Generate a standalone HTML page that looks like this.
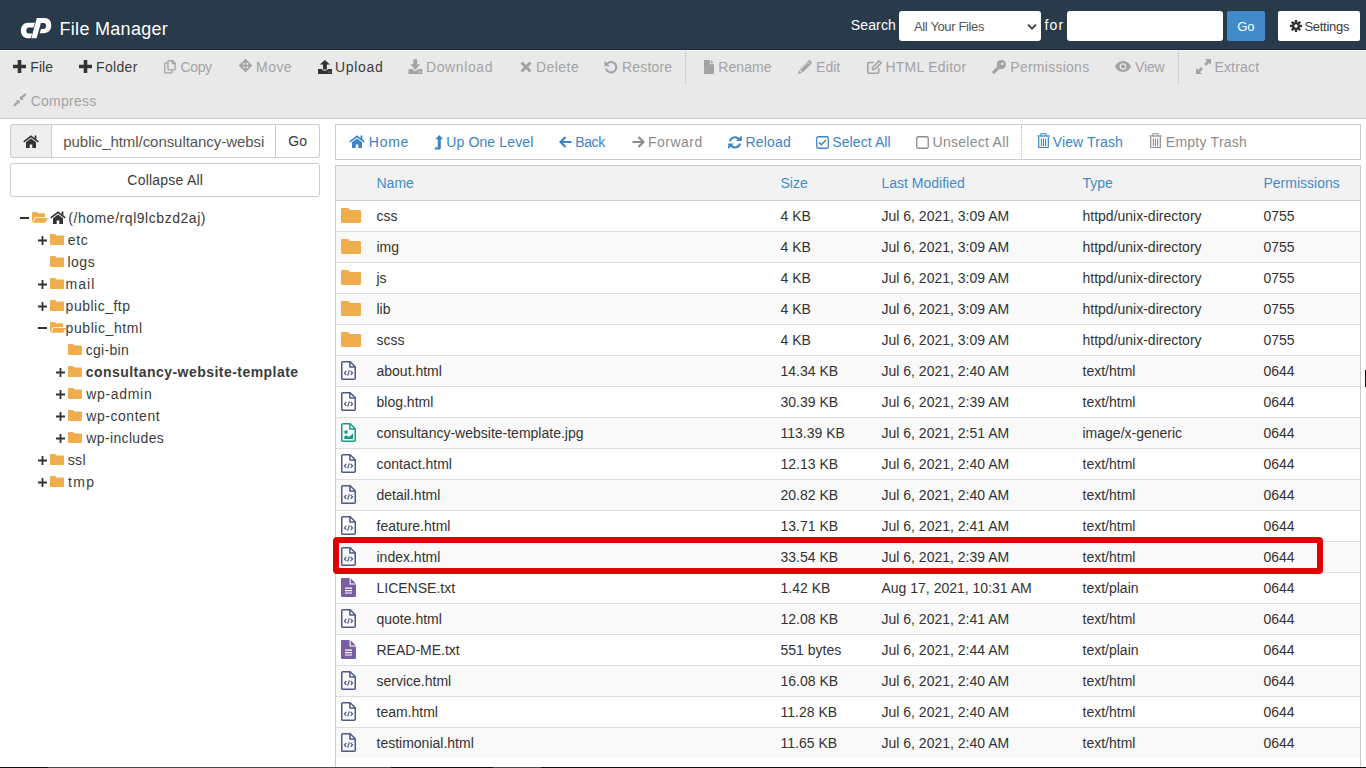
<!DOCTYPE html><html><head><meta charset="utf-8"><style>
*{margin:0;padding:0;box-sizing:border-box}
html,body{width:1366px;height:768px;overflow:hidden;background:#fff;font-family:"Liberation Sans",sans-serif;color:#333}
.ab{position:absolute;white-space:nowrap}
.t{position:absolute;white-space:nowrap;line-height:1}
svg{position:absolute;display:block}
#hdr{position:absolute;left:0;top:0;width:1366px;height:50px;background:#293a4a}
#tb{position:absolute;left:0;top:50px;width:1366px;height:69px;background:#e9e9e9;border-bottom:1px solid #c3c8cd}
.tbi{font-size:14px;color:#333}
.dis{color:#a3a3a3}
.sep{position:absolute;width:0;border-left:1px dotted #b8b8b8}
.lnk{color:#3c84c6}
.gry{color:#8c8c8c}
.tree{font-size:14px;color:#333}
.cell{font-size:14px;color:#333}
.th{font-size:14px;color:#428bca}
</style></head><body>
<div id="hdr"></div>
<svg style="left:0px;top:0px" width="60" height="45" viewBox="0 0 60 45"><path fill="#fff" d="M35 22.7 L28.2 22.7 C23.8 22.7 20.8 26.2 20.8 30.5 C20.8 34.8 23.8 38.3 28.2 38.3 L30.6 38.3 L32.2 33.6 L28.6 33.6 C27.1 33.6 26.3 32.2 26.3 30.5 C26.3 28.8 27.2 27.4 28.7 27.4 L33.5 27.4 Z"/><path fill="#fff" fill-rule="evenodd" d="M36.8 18 L44.6 18 C48.8 18 51.3 21 51.3 25.3 C51.3 29.8 48.4 33.2 44 33.2 L39.6 33.2 L41.1 28.9 L43.9 28.9 C45.4 28.9 46.1 27.4 46.1 25.8 C46.1 24.2 45.3 23 43.8 23 L40.9 23 L36.6 38.3 L31.3 38.3 Z"/></svg>
<div class="t" style="left:59.50px;top:20.00px;font-size:18px;letter-spacing:0.300px;color:#fff">File Manager</div>
<div class="t" style="left:850.70px;top:18.00px;font-size:14px;letter-spacing:0.160px;color:#fff">Search</div>
<div class="ab" style="left:899px;top:11px;width:142px;height:30px;background:#fff;border-radius:3px"></div>
<div class="t" style="left:914.00px;top:20.00px;font-size:13px;letter-spacing:-0.362px;color:#555">All Your Files</div>
<svg style="left:1026.5px;top:22.5px" width="10" height="8" viewBox="0 0 10 8"><path d="M1 1.6 L5 5.6 L9 1.6" stroke="#444" stroke-width="1.9" fill="none"/></svg>
<div class="t" style="left:1044.40px;top:18.00px;font-size:14px;letter-spacing:1.250px;color:#fff">for</div>
<div class="ab" style="left:1067px;top:11px;width:156px;height:30px;background:#fff;border-radius:3px"></div>
<div class="ab" style="left:1227px;top:11px;width:38px;height:30px;background:#428bca;border-radius:2px"></div>
<div class="t" style="left:1237.30px;top:20.00px;font-size:13px;letter-spacing:-0.100px;color:#fff">Go</div>
<div class="ab" style="left:1278px;top:11px;width:82px;height:30px;background:#fff;border-radius:2px"></div>
<svg style="left:1290px;top:20px" width="12" height="12" viewBox="0 0 14 14"><g fill="#333"><circle cx="7" cy="7" r="4.6"/><rect x="5.6" y="0" width="2.8" height="14" transform="rotate(0 7 7)"/><rect x="5.6" y="0" width="2.8" height="14" transform="rotate(45 7 7)"/><rect x="5.6" y="0" width="2.8" height="14" transform="rotate(90 7 7)"/><rect x="5.6" y="0" width="2.8" height="14" transform="rotate(135 7 7)"/></g><circle cx="7" cy="7" r="2" fill="#fff"/></svg>
<div class="t" style="left:1304.40px;top:20.00px;font-size:13px;letter-spacing:-0.271px;color:#3b3b3b">Settings</div>
<div id="tb"></div>
<div class="ab" style="left:0;top:49px;width:1366px;height:1px;background:#1d2a38"></div>
<div class="ab" style="left:0;top:50px;width:1366px;height:1px;background:#f4f4f4"></div>
<svg style="left:13px;top:60px" width="13" height="13" viewBox="0 0 13 13"><path fill="#333" d="M4.7 0h3.6v4.7H13v3.6H8.3V13H4.7V8.3H0V4.7h4.7z"/></svg>
<div class="t" style="left:30.30px;top:60.00px;font-size:14px;letter-spacing:0.033px;color:#3b3b3b">File</div>
<svg style="left:79px;top:60px" width="13" height="13" viewBox="0 0 13 13"><path fill="#333" d="M4.7 0h3.6v4.7H13v3.6H8.3V13H4.7V8.3H0V4.7h4.7z"/></svg>
<div class="t" style="left:96.10px;top:60.00px;font-size:14px;letter-spacing:0.320px;color:#3b3b3b">Folder</div>
<svg style="left:163px;top:59px" width="14" height="15" viewBox="0 0 14 15"><g fill="none" stroke="#a3a3a3" stroke-width="1.3"><path d="M5 3.85H2.6c-.5 0-.85.35-.85.85V13.1c0 .5.35.85.85.85H8.2c.5 0 .85-.35.85-.85V11"/><path d="M5.85 1.75H9.6l2.55 2.55V10.1c0 .5-.35.85-.85.85H5.85c-.5 0-.85-.35-.85-.85V2.6c0-.5.35-.85.85-.85z"/><path d="M9.4 1.9V4.5H12"/></g></svg>
<div class="t" style="left:180.50px;top:60.00px;font-size:14px;letter-spacing:-0.367px;color:#a3a3a3">Copy</div>
<svg style="left:238px;top:58px" width="15" height="15" viewBox="0 0 15 15"><path fill="#a3a3a3" fill-rule="evenodd" d="M7.5 0.8L14.3 7.6 7.5 14.6 0.7 7.6z M4.9 4.9h1.8v1.8H4.9z M8.4 4.9h1.8v1.8H8.4z M4.9 8.5h1.8v1.8H4.9z M8.4 8.5h1.8v1.8H8.4z"/></svg>
<div class="t" style="left:256.10px;top:60.00px;font-size:14px;letter-spacing:0.433px;color:#a3a3a3">Move</div>
<svg style="left:318px;top:59px" width="14" height="15" viewBox="0 0 14 15"><path fill="#333" d="M6.9 0.9L12 5.6H1.8z M5 5.5h3.9v5H5z M0 10.1H4c.3 1 1.5 1.7 2.9 1.7s2.6-.7 2.9-1.7H14V14.9H0z"/><rect x="10.2" y="12.6" width="2.4" height="0.8" fill="#8a8a8a"/></svg>
<div class="t" style="left:334.90px;top:60.00px;font-size:14px;letter-spacing:0.720px;color:#3b3b3b">Upload</div>
<svg style="left:408px;top:59px" width="15" height="15" viewBox="0 0 15 15"><path fill="#a3a3a3" d="M5.3 0.2h3.8v5.1h3.1L7.2 11 2.4 5.3h2.9z M0.5 10.1H4.6c.5 1.2 1.5 2 2.6 2s2.1-.8 2.6-2H14.3V14.9H0.5z"/><rect x="10.3" y="12.6" width="2.6" height="0.8" fill="#e9e9e9"/></svg>
<div class="t" style="left:426.00px;top:60.00px;font-size:14px;letter-spacing:0.600px;color:#a3a3a3">Download</div>
<svg style="left:519.5px;top:60.5px" width="12" height="12" viewBox="0 0 12 12"><path stroke="#a3a3a3" stroke-width="3" d="M1.5 1.5L10.5 10.5M10.5 1.5L1.5 10.5"/></svg>
<div class="t" style="left:536.10px;top:60.00px;font-size:14px;letter-spacing:0.420px;color:#a3a3a3">Delete</div>
<svg style="left:604px;top:59.7px" width="14" height="14" viewBox="0 0 14 14"><path fill="none" stroke="#a3a3a3" stroke-width="2" d="M3.2 3.8A5.2 5.2 0 1 1 2 8.5"/><path fill="#a3a3a3" d="M0.5 0.8v5.5H6z"/></svg>
<div class="t" style="left:622.00px;top:60.00px;font-size:14px;letter-spacing:0.167px;color:#a3a3a3">Restore</div>
<div class="sep" style="left:685px;top:51px;height:33px"></div>
<svg style="left:704px;top:60px" width="10" height="14" viewBox="0 0 10 14"><path fill="#a3a3a3" d="M0.6 0h5.6v4.2H10v9.2c0 .3-.3.6-.6.6H.6c-.3 0-.6-.3-.6-.6V.6C0 .3.3 0 .6 0z M7 0.2L9.8 3.3H7z"/></svg>
<div class="t" style="left:718.20px;top:60.00px;font-size:14px;letter-spacing:0.100px;color:#a3a3a3">Rename</div>
<svg style="left:798px;top:60px" width="14" height="14" viewBox="0 0 14 14"><path fill="#a3a3a3" d="M10.6 0.4c.4-.4 1-.4 1.4 0l1.6 1.6c.4.4.4 1 0 1.4L4.6 12.4 1.6 9.4z M1 10.2l2.8 2.8L0 14z"/><path fill="none" stroke="#e9e9e9" stroke-width="0.8" d="M2.6 9.6l7.6-7.6M9.6 1.4l3 3"/></svg>
<div class="t" style="left:816.10px;top:60.00px;font-size:14px;letter-spacing:-0.033px;color:#a3a3a3">Edit</div>
<svg style="left:866.5px;top:60px" width="15" height="14" viewBox="0 0 15 14"><path fill="none" stroke="#a3a3a3" stroke-width="1.6" d="M7 2.5H2.2c-.8 0-1.4.6-1.4 1.4v8.1c0 .8.6 1.4 1.4 1.4h8.1c.8 0 1.4-.6 1.4-1.4V8"/><path fill="none" stroke="#a3a3a3" stroke-width="1.6" d="M12 1l2 2-6.5 6.5H5.5V7.5z"/></svg>
<div class="t" style="left:885.40px;top:60.00px;font-size:14px;letter-spacing:0.260px;color:#a3a3a3">HTML Editor</div>
<svg style="left:992px;top:60px" width="14" height="14" viewBox="0 0 14 14"><circle cx="9.4" cy="4.6" r="4.6" fill="#a3a3a3"/><path stroke="#a3a3a3" stroke-width="3.2" stroke-linecap="round" d="M6.5 7.5L1.9 12.1"/><circle cx="10.3" cy="3.7" r="1.3" fill="#e9e9e9"/></svg>
<div class="t" style="left:1010.30px;top:60.00px;font-size:14px;letter-spacing:0.260px;color:#a3a3a3">Permissions</div>
<svg style="left:1115px;top:61.3px" width="16" height="11" viewBox="0 0 16 11"><path fill="#a3a3a3" d="M8 0C4 0 1 3 0 5.5 1 8 4 11 8 11s7-3 8-5.5C15 3 12 0 8 0z"/><circle cx="8" cy="5.5" r="3.3" fill="#e9e9e9"/><circle cx="8" cy="5.5" r="2" fill="#a3a3a3"/></svg>
<div class="t" style="left:1135.00px;top:60.00px;font-size:14px;letter-spacing:-0.133px;color:#a3a3a3">View</div>
<div class="sep" style="left:1178px;top:51px;height:33px"></div>
<svg style="left:1196px;top:59px" width="15" height="15" viewBox="0 0 15 15"><path fill="#a3a3a3" d="M9 0h6v6l-2-2-3 3-2-2 3-3z M0 9l2 2 3-3 2 2-3 3 2 2H0z"/></svg>
<div class="t" style="left:1214.40px;top:60.00px;font-size:14px;letter-spacing:0.183px;color:#a3a3a3">Extract</div>
<svg style="left:13px;top:93px" width="14" height="14" viewBox="0 0 14 14"><g fill="#a3a3a3" stroke="#a3a3a3"><path fill="none" stroke-width="2.2" stroke-linecap="round" d="M11.9 1.6L8.6 4.9 M1.6 12.2L4.9 8.9"/><path stroke="none" d="M7 2.8V6.7H10.9z M2.8 7.2H6.7V11z"/></g></svg>
<div class="t" style="left:30.70px;top:94.00px;font-size:14px;letter-spacing:0.257px;color:#a3a3a3">Compress</div>
<div class="ab" style="left:10px;top:124px;width:310px;height:34px;border:1px solid #ccc;border-radius:3px;background:#fff"></div>
<div class="ab" style="left:10px;top:124px;width:42px;height:34px;border:1px solid #ccc;border-radius:3px 0 0 3px;background:#eee"></div>
<div class="ab" style="left:275px;top:124px;width:45px;height:34px;border:1px solid #ccc;border-radius:0 3px 3px 0;background:#fff"></div>
<svg style="left:23px;top:134.5px" width="16" height="13" viewBox="0 0 16 13"><path fill="none" stroke="#333" stroke-width="1.7" d="M0.7 6.9L8 1.4l7.3 5.5"/><path fill="#333" d="M11.6 0.4h1.8v3.8h-1.8z M3 7.3L8 3.5l5 3.8V13H9.3V9.5H6.7V13H3z"/></svg>
<div class="t" style="left:63.30px;top:134.00px;font-size:15px;letter-spacing:-0.057px;color:#555">public_html/consultancy-websi</div>
<div class="t" style="left:288.20px;top:134.00px;font-size:14px;letter-spacing:0.200px;color:#3b3b3b">Go</div>
<div class="ab" style="left:10px;top:163px;width:310px;height:34px;border:1px solid #ccc;border-radius:3px;background:#fff"></div>
<div class="t" style="left:127.30px;top:173.00px;font-size:14px;letter-spacing:0.227px;color:#3b3b3b">Collapse All</div>
<div class="ab" style="left:20px;top:217px;width:9px;height:1.6px;background:#333"></div>
<svg style="left:32px;top:212px" width="16" height="11" viewBox="0 0 16 11"><path fill="#f0ad4e" d="M0 .8C0 .3.3 0 .8 0H5l1 1.2h6.2c.5 0 .8.3.8.8v3.2H3L0 10.5z M3.6 6H16l-2.8 4.7H.9z"/></svg>
<svg style="left:49.7px;top:211px" width="16" height="13" viewBox="0 0 16 13"><path fill="none" stroke="#333" stroke-width="1.7" d="M0.7 6.9L8 1.4l7.3 5.5"/><path fill="#333" d="M11.6 0.4h1.8v3.8h-1.8z M3 7.3L8 3.5l5 3.8V13H9.3V9.5H6.7V13H3z"/></svg>
<div class="t" style="left:68.30px;top:211.00px;font-size:14px;letter-spacing:0.547px;color:#3b3b3b">(/home/rql9lcbzd2aj)</div>
<svg style="left:37.9px;top:235.8px" width="9" height="9" viewBox="0 0 9 9"><path fill="#333" d="M3.6 0h1.8v3.6H9v1.8H5.4V9H3.6V5.4H0V3.6h3.6z"/></svg>
<svg style="left:50px;top:234px" width="14" height="11" viewBox="0 0 14 11"><path fill="#f0ad4e" d="M0.8 0h4.4l1.2 1.5h6.8c.4 0 .8.4.8.8v7.9c0 .4-.4.8-.8.8H.8C.4 11 0 10.6 0 10.2V.8C0 .4.4 0 .8 0z"/></svg>
<div class="t" style="left:67.70px;top:233.00px;font-size:14px;letter-spacing:0.700px;color:#3b3b3b">etc</div>
<svg style="left:50px;top:256px" width="14" height="11" viewBox="0 0 14 11"><path fill="#f0ad4e" d="M0.8 0h4.4l1.2 1.5h6.8c.4 0 .8.4.8.8v7.9c0 .4-.4.8-.8.8H.8C.4 11 0 10.6 0 10.2V.8C0 .4.4 0 .8 0z"/></svg>
<div class="t" style="left:67.40px;top:255.00px;font-size:14px;letter-spacing:0.533px;color:#3b3b3b">logs</div>
<svg style="left:37.9px;top:279.8px" width="9" height="9" viewBox="0 0 9 9"><path fill="#333" d="M3.6 0h1.8v3.6H9v1.8H5.4V9H3.6V5.4H0V3.6h3.6z"/></svg>
<svg style="left:50px;top:278px" width="14" height="11" viewBox="0 0 14 11"><path fill="#f0ad4e" d="M0.8 0h4.4l1.2 1.5h6.8c.4 0 .8.4.8.8v7.9c0 .4-.4.8-.8.8H.8C.4 11 0 10.6 0 10.2V.8C0 .4.4 0 .8 0z"/></svg>
<div class="t" style="left:65.60px;top:277.00px;font-size:14px;letter-spacing:1.000px;color:#3b3b3b">mail</div>
<svg style="left:37.9px;top:301.8px" width="9" height="9" viewBox="0 0 9 9"><path fill="#333" d="M3.6 0h1.8v3.6H9v1.8H5.4V9H3.6V5.4H0V3.6h3.6z"/></svg>
<svg style="left:50px;top:300px" width="14" height="11" viewBox="0 0 14 11"><path fill="#f0ad4e" d="M0.8 0h4.4l1.2 1.5h6.8c.4 0 .8.4.8.8v7.9c0 .4-.4.8-.8.8H.8C.4 11 0 10.6 0 10.2V.8C0 .4.4 0 .8 0z"/></svg>
<div class="t" style="left:65.60px;top:299.00px;font-size:14px;letter-spacing:0.500px;color:#3b3b3b">public_ftp</div>
<div class="ab" style="left:38px;top:327px;width:9px;height:1.6px;background:#333"></div>
<svg style="left:50px;top:322px" width="16" height="11" viewBox="0 0 16 11"><path fill="#f0ad4e" d="M0 .8C0 .3.3 0 .8 0H5l1 1.2h6.2c.5 0 .8.3.8.8v3.2H3L0 10.5z M3.6 6H16l-2.8 4.7H.9z"/></svg>
<div class="t" style="left:65.60px;top:321.00px;font-size:14px;letter-spacing:0.570px;color:#3b3b3b">public_html</div>
<svg style="left:68px;top:344px" width="14" height="11" viewBox="0 0 14 11"><path fill="#f0ad4e" d="M0.8 0h4.4l1.2 1.5h6.8c.4 0 .8.4.8.8v7.9c0 .4-.4.8-.8.8H.8C.4 11 0 10.6 0 10.2V.8C0 .4.4 0 .8 0z"/></svg>
<div class="t" style="left:85.65px;top:343.00px;font-size:14px;letter-spacing:0.325px;color:#3b3b3b">cgi-bin</div>
<svg style="left:55.9px;top:367.8px" width="9" height="9" viewBox="0 0 9 9"><path fill="#333" d="M3.6 0h1.8v3.6H9v1.8H5.4V9H3.6V5.4H0V3.6h3.6z"/></svg>
<svg style="left:68px;top:366px" width="14" height="11" viewBox="0 0 14 11"><path fill="#f0ad4e" d="M0.8 0h4.4l1.2 1.5h6.8c.4 0 .8.4.8.8v7.9c0 .4-.4.8-.8.8H.8C.4 11 0 10.6 0 10.2V.8C0 .4.4 0 .8 0z"/></svg>
<div class="t" style="left:85.65px;top:365.00px;font-size:14px;letter-spacing:0.465px;font-weight:bold;color:#3b3b3b">consultancy-website-template</div>
<svg style="left:55.9px;top:389.8px" width="9" height="9" viewBox="0 0 9 9"><path fill="#333" d="M3.6 0h1.8v3.6H9v1.8H5.4V9H3.6V5.4H0V3.6h3.6z"/></svg>
<svg style="left:68px;top:388px" width="14" height="11" viewBox="0 0 14 11"><path fill="#f0ad4e" d="M0.8 0h4.4l1.2 1.5h6.8c.4 0 .8.4.8.8v7.9c0 .4-.4.8-.8.8H.8C.4 11 0 10.6 0 10.2V.8C0 .4.4 0 .8 0z"/></svg>
<div class="t" style="left:86.25px;top:387.00px;font-size:14px;letter-spacing:0.679px;color:#3b3b3b">wp-admin</div>
<svg style="left:55.9px;top:411.8px" width="9" height="9" viewBox="0 0 9 9"><path fill="#333" d="M3.6 0h1.8v3.6H9v1.8H5.4V9H3.6V5.4H0V3.6h3.6z"/></svg>
<svg style="left:68px;top:410px" width="14" height="11" viewBox="0 0 14 11"><path fill="#f0ad4e" d="M0.8 0h4.4l1.2 1.5h6.8c.4 0 .8.4.8.8v7.9c0 .4-.4.8-.8.8H.8C.4 11 0 10.6 0 10.2V.8C0 .4.4 0 .8 0z"/></svg>
<div class="t" style="left:86.25px;top:409.00px;font-size:14px;letter-spacing:0.550px;color:#3b3b3b">wp-content</div>
<svg style="left:55.9px;top:433.8px" width="9" height="9" viewBox="0 0 9 9"><path fill="#333" d="M3.6 0h1.8v3.6H9v1.8H5.4V9H3.6V5.4H0V3.6h3.6z"/></svg>
<svg style="left:68px;top:432px" width="14" height="11" viewBox="0 0 14 11"><path fill="#f0ad4e" d="M0.8 0h4.4l1.2 1.5h6.8c.4 0 .8.4.8.8v7.9c0 .4-.4.8-.8.8H.8C.4 11 0 10.6 0 10.2V.8C0 .4.4 0 .8 0z"/></svg>
<div class="t" style="left:86.25px;top:431.00px;font-size:14px;letter-spacing:0.365px;color:#3b3b3b">wp-includes</div>
<svg style="left:37.9px;top:455.8px" width="9" height="9" viewBox="0 0 9 9"><path fill="#333" d="M3.6 0h1.8v3.6H9v1.8H5.4V9H3.6V5.4H0V3.6h3.6z"/></svg>
<svg style="left:50px;top:454px" width="14" height="11" viewBox="0 0 14 11"><path fill="#f0ad4e" d="M0.8 0h4.4l1.2 1.5h6.8c.4 0 .8.4.8.8v7.9c0 .4-.4.8-.8.8H.8C.4 11 0 10.6 0 10.2V.8C0 .4.4 0 .8 0z"/></svg>
<div class="t" style="left:67.70px;top:453.00px;font-size:14px;letter-spacing:0.350px;color:#3b3b3b">ssl</div>
<svg style="left:37.9px;top:477.8px" width="9" height="9" viewBox="0 0 9 9"><path fill="#333" d="M3.6 0h1.8v3.6H9v1.8H5.4V9H3.6V5.4H0V3.6h3.6z"/></svg>
<svg style="left:50px;top:476px" width="14" height="11" viewBox="0 0 14 11"><path fill="#f0ad4e" d="M0.8 0h4.4l1.2 1.5h6.8c.4 0 .8.4.8.8v7.9c0 .4-.4.8-.8.8H.8C.4 11 0 10.6 0 10.2V.8C0 .4.4 0 .8 0z"/></svg>
<div class="t" style="left:67.90px;top:475.00px;font-size:14px;letter-spacing:1.450px;color:#3b3b3b">tmp</div>
<div class="ab" style="left:335px;top:124px;width:1026px;height:36px;border:1px solid #ccc;background:#fff"></div>
<svg style="left:349px;top:135px" width="16" height="13" viewBox="0 0 16 13"><path fill="none" stroke="#3c84c6" stroke-width="1.7" d="M0.7 6.9L8 1.4l7.3 5.5"/><path fill="#3c84c6" d="M11.6 0.4h1.8v3.8h-1.8z M3 7.3L8 3.5l5 3.8V13H9.3V9.5H6.7V13H3z"/></svg>
<div class="t" style="left:368.80px;top:135.00px;font-size:14px;letter-spacing:0.733px;color:#3c84c6">Home</div>
<svg style="left:434px;top:134.5px" width="10" height="15" viewBox="0 0 10 15"><path fill="#3c84c6" d="M5.3 0L9.1 4.2H6.8V13.3c0 .7-.5 1.2-1.2 1.2H0.2L1.6 12.2H3.8V4.2H1.5z"/></svg>
<div class="t" style="left:446.20px;top:135.00px;font-size:14px;letter-spacing:0.145px;color:#3c84c6">Up One Level</div>
<svg style="left:559px;top:135.5px" width="13" height="12" viewBox="0 0 13 12"><path fill="none" stroke="#3c84c6" stroke-width="2.2" d="M12.5 6H2M6.5 1L1.5 6l5 5"/></svg>
<div class="t" style="left:575.20px;top:135.00px;font-size:14px;letter-spacing:-0.367px;color:#3c84c6">Back</div>
<svg style="left:632px;top:135.5px" width="13" height="12" viewBox="0 0 13 12"><path fill="none" stroke="#8c8c8c" stroke-width="2.2" d="M0.5 6H11M6.5 1l5 5-5 5"/></svg>
<div class="t" style="left:648.10px;top:135.00px;font-size:14px;letter-spacing:0.467px;color:#8c8c8c">Forward</div>
<svg style="left:728px;top:134.5px" width="14" height="15" viewBox="0 0 14 15"><path fill="none" stroke="#3c84c6" stroke-width="2" d="M1.9 6.4A5.2 5.2 0 0 1 11 4.1M12.1 8.4A5.2 5.2 0 0 1 3 10.5"/><path fill="#3c84c6" d="M8 6.1H13.8V0.5z M0.2 8.4H5.7L0.2 14.3z"/></svg>
<div class="t" style="left:745.50px;top:135.00px;font-size:14px;letter-spacing:0.160px;color:#3c84c6">Reload</div>
<svg style="left:816px;top:135.5px" width="13" height="13" viewBox="0 0 13 13"><rect x="0.75" y="0.75" width="11.5" height="11.5" rx="1.5" fill="none" stroke="#3c84c6" stroke-width="1.3"/><path d="M3 6.3l2.4 2.4L10 4" fill="none" stroke="#3c84c6" stroke-width="1.6"/></svg>
<div class="t" style="left:832.30px;top:135.00px;font-size:14px;letter-spacing:0.089px;color:#3c84c6">Select All</div>
<svg style="left:916px;top:135.5px" width="13" height="13" viewBox="0 0 13 13"><rect x="0.75" y="0.75" width="11.5" height="11.5" rx="1.5" fill="none" stroke="#8c8c8c" stroke-width="1.3"/></svg>
<div class="t" style="left:932.50px;top:135.00px;font-size:14px;letter-spacing:0.282px;color:#8c8c8c">Unselect All</div>
<div class="sep" style="left:1021px;top:126px;height:32px"></div>
<svg style="left:1036.5px;top:133.2px" width="13" height="15" viewBox="0 0 13 15"><g fill="none" stroke="#3c84c6"><path stroke-width="1.1" d="M3.9 2.4V0.7h5.2v1.7"/><path stroke-width="1.3" d="M0.3 3h12.4"/><path stroke-width="1.2" d="M1.7 4v10.1c0 .4.3.6.6.6h8.4c.3 0 .6-.2.6-.6V4"/><path stroke-width="1.1" d="M4.4 5.4v7.8M6.5 5.4v7.8M8.6 5.4v7.8"/></g></svg>
<div class="t" style="left:1052.80px;top:135.00px;font-size:14px;letter-spacing:0.111px;color:#3c84c6">View Trash</div>
<svg style="left:1149px;top:133.2px" width="13" height="15" viewBox="0 0 13 15"><g fill="none" stroke="#8c8c8c"><path stroke-width="1.1" d="M3.9 2.4V0.7h5.2v1.7"/><path stroke-width="1.3" d="M0.3 3h12.4"/><path stroke-width="1.2" d="M1.7 4v10.1c0 .4.3.6.6.6h8.4c.3 0 .6-.2.6-.6V4"/><path stroke-width="1.1" d="M4.4 5.4v7.8M6.5 5.4v7.8M8.6 5.4v7.8"/></g></svg>
<div class="t" style="left:1165.80px;top:135.00px;font-size:14px;letter-spacing:0.250px;color:#8c8c8c">Empty Trash</div>
<div class="ab" style="left:335px;top:165px;width:1026px;height:620px;border:1px solid #ccc;background:#fff"></div>
<div class="ab" style="left:336px;top:166px;width:1024px;height:34px;background:#f2f2f2"></div>
<div class="ab" style="left:336px;top:200px;width:1024px;height:1px;background:#cfcfcf"></div>
<div class="t th" style="left:376.5px;top:176px">Name</div>
<div class="t th" style="left:780.5px;top:176px">Size</div>
<div class="t th" style="left:881.5px;top:176px">Last Modified</div>
<div class="t th" style="left:1082.5px;top:176px">Type</div>
<div class="t th" style="left:1263.5px;top:176px">Permissions</div>
<svg style="left:341px;top:208px" width="20" height="15" viewBox="0 0 20 15"><path fill="#f0ad4e" d="M1.2 0h6l1.8 2H18.8c.7 0 1.2.5 1.2 1.2v10.6c0 .7-.5 1.2-1.2 1.2H1.2C.5 15 0 14.5 0 13.8V1.2C0 .5.5 0 1.2 0z"/></svg>
<div class="t cell" style="left:376.5px;top:209px">css</div>
<div class="t cell" style="left:780.5px;top:209px">4 KB</div>
<div class="t cell" style="left:881.5px;top:209px">Jul 6, 2021, 3:09 AM</div>
<div class="t cell" style="left:1082.5px;top:209px">httpd/unix-directory</div>
<div class="t cell" style="left:1263.5px;top:209px">0755</div>
<div class="ab" style="left:336px;top:231px;width:1024px;height:1px;background:#ddd"></div>
<div class="ab" style="left:336px;top:232px;width:1024px;height:30px;background:#f9f9f9"></div>
<svg style="left:341px;top:239px" width="20" height="15" viewBox="0 0 20 15"><path fill="#f0ad4e" d="M1.2 0h6l1.8 2H18.8c.7 0 1.2.5 1.2 1.2v10.6c0 .7-.5 1.2-1.2 1.2H1.2C.5 15 0 14.5 0 13.8V1.2C0 .5.5 0 1.2 0z"/></svg>
<div class="t cell" style="left:376.5px;top:240px">img</div>
<div class="t cell" style="left:780.5px;top:240px">4 KB</div>
<div class="t cell" style="left:881.5px;top:240px">Jul 6, 2021, 3:09 AM</div>
<div class="t cell" style="left:1082.5px;top:240px">httpd/unix-directory</div>
<div class="t cell" style="left:1263.5px;top:240px">0755</div>
<div class="ab" style="left:336px;top:262px;width:1024px;height:1px;background:#ddd"></div>
<div class="ab" style="left:336px;top:263px;width:1024px;height:30px;background:#fff"></div>
<svg style="left:341px;top:270px" width="20" height="15" viewBox="0 0 20 15"><path fill="#f0ad4e" d="M1.2 0h6l1.8 2H18.8c.7 0 1.2.5 1.2 1.2v10.6c0 .7-.5 1.2-1.2 1.2H1.2C.5 15 0 14.5 0 13.8V1.2C0 .5.5 0 1.2 0z"/></svg>
<div class="t cell" style="left:376.5px;top:271px">js</div>
<div class="t cell" style="left:780.5px;top:271px">4 KB</div>
<div class="t cell" style="left:881.5px;top:271px">Jul 6, 2021, 3:09 AM</div>
<div class="t cell" style="left:1082.5px;top:271px">httpd/unix-directory</div>
<div class="t cell" style="left:1263.5px;top:271px">0755</div>
<div class="ab" style="left:336px;top:293px;width:1024px;height:1px;background:#ddd"></div>
<div class="ab" style="left:336px;top:294px;width:1024px;height:30px;background:#f9f9f9"></div>
<svg style="left:341px;top:301px" width="20" height="15" viewBox="0 0 20 15"><path fill="#f0ad4e" d="M1.2 0h6l1.8 2H18.8c.7 0 1.2.5 1.2 1.2v10.6c0 .7-.5 1.2-1.2 1.2H1.2C.5 15 0 14.5 0 13.8V1.2C0 .5.5 0 1.2 0z"/></svg>
<div class="t cell" style="left:376.5px;top:302px">lib</div>
<div class="t cell" style="left:780.5px;top:302px">4 KB</div>
<div class="t cell" style="left:881.5px;top:302px">Jul 6, 2021, 3:09 AM</div>
<div class="t cell" style="left:1082.5px;top:302px">httpd/unix-directory</div>
<div class="t cell" style="left:1263.5px;top:302px">0755</div>
<div class="ab" style="left:336px;top:324px;width:1024px;height:1px;background:#ddd"></div>
<div class="ab" style="left:336px;top:325px;width:1024px;height:30px;background:#fff"></div>
<svg style="left:341px;top:332px" width="20" height="15" viewBox="0 0 20 15"><path fill="#f0ad4e" d="M1.2 0h6l1.8 2H18.8c.7 0 1.2.5 1.2 1.2v10.6c0 .7-.5 1.2-1.2 1.2H1.2C.5 15 0 14.5 0 13.8V1.2C0 .5.5 0 1.2 0z"/></svg>
<div class="t cell" style="left:376.5px;top:333px">scss</div>
<div class="t cell" style="left:780.5px;top:333px">4 KB</div>
<div class="t cell" style="left:881.5px;top:333px">Jul 6, 2021, 3:09 AM</div>
<div class="t cell" style="left:1082.5px;top:333px">httpd/unix-directory</div>
<div class="t cell" style="left:1263.5px;top:333px">0755</div>
<div class="ab" style="left:336px;top:355px;width:1024px;height:1px;background:#ddd"></div>
<div class="ab" style="left:336px;top:356px;width:1024px;height:30px;background:#f9f9f9"></div>
<svg style="left:341px;top:361px" width="15" height="19" viewBox="0 0 15 19"><path fill="none" stroke="#4d5a85" stroke-width="1.5" stroke-linejoin="round" d="M1.8 0.75h7.4l5.05 5.05V17.2c0 .6-.45 1.05-1.05 1.05H1.8c-.6 0-1.05-.45-1.05-1.05V1.8c0-.6.45-1.05 1.05-1.05z"/><path fill="none" stroke="#4d5a85" stroke-width="1.5" stroke-linejoin="round" d="M8.9 0.9v5.2h5.2"/><path fill="none" stroke="#4d5a85" stroke-width="1.3" d="M5.3 9.9L3.5 11.9l1.8 2M9.7 9.9l1.8 2-1.8 2"/><path fill="none" stroke="#4d5a85" stroke-width="1.2" d="M8.3 9.3L6.7 14.6"/></svg>
<div class="t cell" style="left:376.5px;top:364px">about.html</div>
<div class="t cell" style="left:780.5px;top:364px">14.34 KB</div>
<div class="t cell" style="left:881.5px;top:364px">Jul 6, 2021, 2:40 AM</div>
<div class="t cell" style="left:1082.5px;top:364px">text/html</div>
<div class="t cell" style="left:1263.5px;top:364px">0644</div>
<div class="ab" style="left:336px;top:386px;width:1024px;height:1px;background:#ddd"></div>
<div class="ab" style="left:336px;top:387px;width:1024px;height:30px;background:#fff"></div>
<svg style="left:341px;top:392px" width="15" height="19" viewBox="0 0 15 19"><path fill="none" stroke="#4d5a85" stroke-width="1.5" stroke-linejoin="round" d="M1.8 0.75h7.4l5.05 5.05V17.2c0 .6-.45 1.05-1.05 1.05H1.8c-.6 0-1.05-.45-1.05-1.05V1.8c0-.6.45-1.05 1.05-1.05z"/><path fill="none" stroke="#4d5a85" stroke-width="1.5" stroke-linejoin="round" d="M8.9 0.9v5.2h5.2"/><path fill="none" stroke="#4d5a85" stroke-width="1.3" d="M5.3 9.9L3.5 11.9l1.8 2M9.7 9.9l1.8 2-1.8 2"/><path fill="none" stroke="#4d5a85" stroke-width="1.2" d="M8.3 9.3L6.7 14.6"/></svg>
<div class="t cell" style="left:376.5px;top:395px">blog.html</div>
<div class="t cell" style="left:780.5px;top:395px">30.39 KB</div>
<div class="t cell" style="left:881.5px;top:395px">Jul 6, 2021, 2:39 AM</div>
<div class="t cell" style="left:1082.5px;top:395px">text/html</div>
<div class="t cell" style="left:1263.5px;top:395px">0644</div>
<div class="ab" style="left:336px;top:417px;width:1024px;height:1px;background:#ddd"></div>
<div class="ab" style="left:336px;top:418px;width:1024px;height:30px;background:#f9f9f9"></div>
<svg style="left:341px;top:423px" width="15" height="19" viewBox="0 0 15 19"><path fill="none" stroke="#159d86" stroke-width="1.5" stroke-linejoin="round" d="M1.8 0.75h7.4l5.05 5.05V17.2c0 .6-.45 1.05-1.05 1.05H1.8c-.6 0-1.05-.45-1.05-1.05V1.8c0-.6.45-1.05 1.05-1.05z"/><path fill="none" stroke="#159d86" stroke-width="1.5" stroke-linejoin="round" d="M8.9 0.9v5.2h5.2"/><circle cx="5" cy="9.1" r="1.8" fill="#159d86"/><path fill="#159d86" d="M3.3 16h8.7V10.3L9.4 12.9 7.2 13.8 5.5 12.2 3.3 13.6z"/></svg>
<div class="t cell" style="left:376.5px;top:426px">consultancy-website-template.jpg</div>
<div class="t cell" style="left:780.5px;top:426px">113.39 KB</div>
<div class="t cell" style="left:881.5px;top:426px">Jul 6, 2021, 2:51 AM</div>
<div class="t cell" style="left:1082.5px;top:426px">image/x-generic</div>
<div class="t cell" style="left:1263.5px;top:426px">0644</div>
<div class="ab" style="left:336px;top:448px;width:1024px;height:1px;background:#ddd"></div>
<div class="ab" style="left:336px;top:449px;width:1024px;height:30px;background:#fff"></div>
<svg style="left:341px;top:454px" width="15" height="19" viewBox="0 0 15 19"><path fill="none" stroke="#4d5a85" stroke-width="1.5" stroke-linejoin="round" d="M1.8 0.75h7.4l5.05 5.05V17.2c0 .6-.45 1.05-1.05 1.05H1.8c-.6 0-1.05-.45-1.05-1.05V1.8c0-.6.45-1.05 1.05-1.05z"/><path fill="none" stroke="#4d5a85" stroke-width="1.5" stroke-linejoin="round" d="M8.9 0.9v5.2h5.2"/><path fill="none" stroke="#4d5a85" stroke-width="1.3" d="M5.3 9.9L3.5 11.9l1.8 2M9.7 9.9l1.8 2-1.8 2"/><path fill="none" stroke="#4d5a85" stroke-width="1.2" d="M8.3 9.3L6.7 14.6"/></svg>
<div class="t cell" style="left:376.5px;top:457px">contact.html</div>
<div class="t cell" style="left:780.5px;top:457px">12.13 KB</div>
<div class="t cell" style="left:881.5px;top:457px">Jul 6, 2021, 2:40 AM</div>
<div class="t cell" style="left:1082.5px;top:457px">text/html</div>
<div class="t cell" style="left:1263.5px;top:457px">0644</div>
<div class="ab" style="left:336px;top:479px;width:1024px;height:1px;background:#ddd"></div>
<div class="ab" style="left:336px;top:480px;width:1024px;height:30px;background:#f9f9f9"></div>
<svg style="left:341px;top:485px" width="15" height="19" viewBox="0 0 15 19"><path fill="none" stroke="#4d5a85" stroke-width="1.5" stroke-linejoin="round" d="M1.8 0.75h7.4l5.05 5.05V17.2c0 .6-.45 1.05-1.05 1.05H1.8c-.6 0-1.05-.45-1.05-1.05V1.8c0-.6.45-1.05 1.05-1.05z"/><path fill="none" stroke="#4d5a85" stroke-width="1.5" stroke-linejoin="round" d="M8.9 0.9v5.2h5.2"/><path fill="none" stroke="#4d5a85" stroke-width="1.3" d="M5.3 9.9L3.5 11.9l1.8 2M9.7 9.9l1.8 2-1.8 2"/><path fill="none" stroke="#4d5a85" stroke-width="1.2" d="M8.3 9.3L6.7 14.6"/></svg>
<div class="t cell" style="left:376.5px;top:488px">detail.html</div>
<div class="t cell" style="left:780.5px;top:488px">20.82 KB</div>
<div class="t cell" style="left:881.5px;top:488px">Jul 6, 2021, 2:40 AM</div>
<div class="t cell" style="left:1082.5px;top:488px">text/html</div>
<div class="t cell" style="left:1263.5px;top:488px">0644</div>
<div class="ab" style="left:336px;top:510px;width:1024px;height:1px;background:#ddd"></div>
<div class="ab" style="left:336px;top:511px;width:1024px;height:30px;background:#fff"></div>
<svg style="left:341px;top:516px" width="15" height="19" viewBox="0 0 15 19"><path fill="none" stroke="#4d5a85" stroke-width="1.5" stroke-linejoin="round" d="M1.8 0.75h7.4l5.05 5.05V17.2c0 .6-.45 1.05-1.05 1.05H1.8c-.6 0-1.05-.45-1.05-1.05V1.8c0-.6.45-1.05 1.05-1.05z"/><path fill="none" stroke="#4d5a85" stroke-width="1.5" stroke-linejoin="round" d="M8.9 0.9v5.2h5.2"/><path fill="none" stroke="#4d5a85" stroke-width="1.3" d="M5.3 9.9L3.5 11.9l1.8 2M9.7 9.9l1.8 2-1.8 2"/><path fill="none" stroke="#4d5a85" stroke-width="1.2" d="M8.3 9.3L6.7 14.6"/></svg>
<div class="t cell" style="left:376.5px;top:519px">feature.html</div>
<div class="t cell" style="left:780.5px;top:519px">13.71 KB</div>
<div class="t cell" style="left:881.5px;top:519px">Jul 6, 2021, 2:41 AM</div>
<div class="t cell" style="left:1082.5px;top:519px">text/html</div>
<div class="t cell" style="left:1263.5px;top:519px">0644</div>
<div class="ab" style="left:336px;top:541px;width:1024px;height:1px;background:#ddd"></div>
<div class="ab" style="left:336px;top:542px;width:1024px;height:30px;background:#f9f9f9"></div>
<svg style="left:341px;top:547px" width="15" height="19" viewBox="0 0 15 19"><path fill="none" stroke="#4d5a85" stroke-width="1.5" stroke-linejoin="round" d="M1.8 0.75h7.4l5.05 5.05V17.2c0 .6-.45 1.05-1.05 1.05H1.8c-.6 0-1.05-.45-1.05-1.05V1.8c0-.6.45-1.05 1.05-1.05z"/><path fill="none" stroke="#4d5a85" stroke-width="1.5" stroke-linejoin="round" d="M8.9 0.9v5.2h5.2"/><path fill="none" stroke="#4d5a85" stroke-width="1.3" d="M5.3 9.9L3.5 11.9l1.8 2M9.7 9.9l1.8 2-1.8 2"/><path fill="none" stroke="#4d5a85" stroke-width="1.2" d="M8.3 9.3L6.7 14.6"/></svg>
<div class="t cell" style="left:376.5px;top:550px">index.html</div>
<div class="t cell" style="left:780.5px;top:550px">33.54 KB</div>
<div class="t cell" style="left:881.5px;top:550px">Jul 6, 2021, 2:39 AM</div>
<div class="t cell" style="left:1082.5px;top:550px">text/html</div>
<div class="t cell" style="left:1263.5px;top:550px">0644</div>
<div class="ab" style="left:336px;top:572px;width:1024px;height:1px;background:#ddd"></div>
<div class="ab" style="left:336px;top:573px;width:1024px;height:30px;background:#fff"></div>
<svg style="left:341px;top:578px" width="15" height="19" viewBox="0 0 15 19"><path fill="#7a5fa0" d="M1.2 0H8.6v6.6H15v11.2c0 .7-.5 1.2-1.2 1.2H1.2C.5 19 0 18.5 0 17.8V1.2C0 .5.5 0 1.2 0z M9.7 0.2L14.8 5.4H9.7z"/><path fill="#fff" d="M4 9.6h7v1.2H4z M4 12h7v1.2H4z M4 14.4h7v1.2H4z"/></svg>
<div class="t cell" style="left:376.5px;top:581px">LICENSE.txt</div>
<div class="t cell" style="left:780.5px;top:581px">1.42 KB</div>
<div class="t cell" style="left:881.5px;top:581px">Aug 17, 2021, 10:31 AM</div>
<div class="t cell" style="left:1082.5px;top:581px">text/plain</div>
<div class="t cell" style="left:1263.5px;top:581px">0644</div>
<div class="ab" style="left:336px;top:603px;width:1024px;height:1px;background:#ddd"></div>
<div class="ab" style="left:336px;top:604px;width:1024px;height:30px;background:#f9f9f9"></div>
<svg style="left:341px;top:609px" width="15" height="19" viewBox="0 0 15 19"><path fill="none" stroke="#4d5a85" stroke-width="1.5" stroke-linejoin="round" d="M1.8 0.75h7.4l5.05 5.05V17.2c0 .6-.45 1.05-1.05 1.05H1.8c-.6 0-1.05-.45-1.05-1.05V1.8c0-.6.45-1.05 1.05-1.05z"/><path fill="none" stroke="#4d5a85" stroke-width="1.5" stroke-linejoin="round" d="M8.9 0.9v5.2h5.2"/><path fill="none" stroke="#4d5a85" stroke-width="1.3" d="M5.3 9.9L3.5 11.9l1.8 2M9.7 9.9l1.8 2-1.8 2"/><path fill="none" stroke="#4d5a85" stroke-width="1.2" d="M8.3 9.3L6.7 14.6"/></svg>
<div class="t cell" style="left:376.5px;top:612px">quote.html</div>
<div class="t cell" style="left:780.5px;top:612px">12.08 KB</div>
<div class="t cell" style="left:881.5px;top:612px">Jul 6, 2021, 2:41 AM</div>
<div class="t cell" style="left:1082.5px;top:612px">text/html</div>
<div class="t cell" style="left:1263.5px;top:612px">0644</div>
<div class="ab" style="left:336px;top:634px;width:1024px;height:1px;background:#ddd"></div>
<div class="ab" style="left:336px;top:635px;width:1024px;height:30px;background:#fff"></div>
<svg style="left:341px;top:640px" width="15" height="19" viewBox="0 0 15 19"><path fill="#7a5fa0" d="M1.2 0H8.6v6.6H15v11.2c0 .7-.5 1.2-1.2 1.2H1.2C.5 19 0 18.5 0 17.8V1.2C0 .5.5 0 1.2 0z M9.7 0.2L14.8 5.4H9.7z"/><path fill="#fff" d="M4 9.6h7v1.2H4z M4 12h7v1.2H4z M4 14.4h7v1.2H4z"/></svg>
<div class="t cell" style="left:376.5px;top:643px">READ-ME.txt</div>
<div class="t cell" style="left:780.5px;top:643px">551 bytes</div>
<div class="t cell" style="left:881.5px;top:643px">Jul 6, 2021, 2:44 AM</div>
<div class="t cell" style="left:1082.5px;top:643px">text/plain</div>
<div class="t cell" style="left:1263.5px;top:643px">0644</div>
<div class="ab" style="left:336px;top:665px;width:1024px;height:1px;background:#ddd"></div>
<div class="ab" style="left:336px;top:666px;width:1024px;height:30px;background:#f9f9f9"></div>
<svg style="left:341px;top:671px" width="15" height="19" viewBox="0 0 15 19"><path fill="none" stroke="#4d5a85" stroke-width="1.5" stroke-linejoin="round" d="M1.8 0.75h7.4l5.05 5.05V17.2c0 .6-.45 1.05-1.05 1.05H1.8c-.6 0-1.05-.45-1.05-1.05V1.8c0-.6.45-1.05 1.05-1.05z"/><path fill="none" stroke="#4d5a85" stroke-width="1.5" stroke-linejoin="round" d="M8.9 0.9v5.2h5.2"/><path fill="none" stroke="#4d5a85" stroke-width="1.3" d="M5.3 9.9L3.5 11.9l1.8 2M9.7 9.9l1.8 2-1.8 2"/><path fill="none" stroke="#4d5a85" stroke-width="1.2" d="M8.3 9.3L6.7 14.6"/></svg>
<div class="t cell" style="left:376.5px;top:674px">service.html</div>
<div class="t cell" style="left:780.5px;top:674px">16.08 KB</div>
<div class="t cell" style="left:881.5px;top:674px">Jul 6, 2021, 2:40 AM</div>
<div class="t cell" style="left:1082.5px;top:674px">text/html</div>
<div class="t cell" style="left:1263.5px;top:674px">0644</div>
<div class="ab" style="left:336px;top:696px;width:1024px;height:1px;background:#ddd"></div>
<div class="ab" style="left:336px;top:697px;width:1024px;height:30px;background:#fff"></div>
<svg style="left:341px;top:702px" width="15" height="19" viewBox="0 0 15 19"><path fill="none" stroke="#4d5a85" stroke-width="1.5" stroke-linejoin="round" d="M1.8 0.75h7.4l5.05 5.05V17.2c0 .6-.45 1.05-1.05 1.05H1.8c-.6 0-1.05-.45-1.05-1.05V1.8c0-.6.45-1.05 1.05-1.05z"/><path fill="none" stroke="#4d5a85" stroke-width="1.5" stroke-linejoin="round" d="M8.9 0.9v5.2h5.2"/><path fill="none" stroke="#4d5a85" stroke-width="1.3" d="M5.3 9.9L3.5 11.9l1.8 2M9.7 9.9l1.8 2-1.8 2"/><path fill="none" stroke="#4d5a85" stroke-width="1.2" d="M8.3 9.3L6.7 14.6"/></svg>
<div class="t cell" style="left:376.5px;top:705px">team.html</div>
<div class="t cell" style="left:780.5px;top:705px">11.28 KB</div>
<div class="t cell" style="left:881.5px;top:705px">Jul 6, 2021, 2:40 AM</div>
<div class="t cell" style="left:1082.5px;top:705px">text/html</div>
<div class="t cell" style="left:1263.5px;top:705px">0644</div>
<div class="ab" style="left:336px;top:727px;width:1024px;height:1px;background:#ddd"></div>
<div class="ab" style="left:336px;top:728px;width:1024px;height:30px;background:#f9f9f9"></div>
<svg style="left:341px;top:733px" width="15" height="19" viewBox="0 0 15 19"><path fill="none" stroke="#4d5a85" stroke-width="1.5" stroke-linejoin="round" d="M1.8 0.75h7.4l5.05 5.05V17.2c0 .6-.45 1.05-1.05 1.05H1.8c-.6 0-1.05-.45-1.05-1.05V1.8c0-.6.45-1.05 1.05-1.05z"/><path fill="none" stroke="#4d5a85" stroke-width="1.5" stroke-linejoin="round" d="M8.9 0.9v5.2h5.2"/><path fill="none" stroke="#4d5a85" stroke-width="1.3" d="M5.3 9.9L3.5 11.9l1.8 2M9.7 9.9l1.8 2-1.8 2"/><path fill="none" stroke="#4d5a85" stroke-width="1.2" d="M8.3 9.3L6.7 14.6"/></svg>
<div class="t cell" style="left:376.5px;top:736px">testimonial.html</div>
<div class="t cell" style="left:780.5px;top:736px">11.65 KB</div>
<div class="t cell" style="left:881.5px;top:736px">Jul 6, 2021, 2:40 AM</div>
<div class="t cell" style="left:1082.5px;top:736px">text/html</div>
<div class="t cell" style="left:1263.5px;top:736px">0644</div>
<div class="ab" style="left:333px;top:537px;width:990px;height:37px;border:6px solid #e00000;border-radius:4px"></div>
<div class="ab" style="left:1365px;top:370px;width:1px;height:17px;background:#111"></div>
<div class="ab" style="left:0;top:767px;width:1366px;height:1px;background:#111"></div>
<div class="ab" style="left:48px;top:767px;width:343px;height:1px;background:#484848"></div>
<div class="ab" style="left:493px;top:767px;width:48px;height:1px;background:#484848"></div>
</body></html>
